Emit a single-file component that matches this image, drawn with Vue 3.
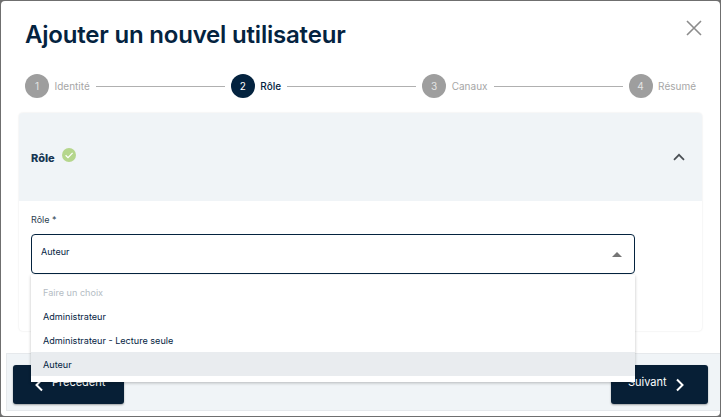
<template>
  <div class="backdrop">
    <div class="modal">
      <header class="modal-header">
        <h1 class="title">Ajouter un nouvel utilisateur</h1>
        <button type="button" class="close" aria-label="Fermer">
          <svg width="16" height="16" viewBox="0 0 16 16">
            <path d="M1 1L15 15M15 1L1 15" stroke="#8c8c8c" stroke-width="1.6" fill="none" />
          </svg>
        </button>
      </header>

      <ol class="stepper">
        <template v-for="(step, i) in steps" :key="step.label">
          <li v-if="i > 0" class="line"></li>
          <li class="step" :class="{ active: step.active }">
            <span class="num">{{ i + 1 }}</span>
            <span class="label">{{ step.label }}</span>
          </li>
        </template>
      </ol>

      <section class="card">
        <div class="card-header">
          <span class="card-title">Rôle</span>
          <svg class="check" width="14" height="14" viewBox="0 0 14 14">
            <circle cx="7" cy="7" r="7" fill="#b5d68c" />
            <path d="M3.6 7.3L6 9.6L10.6 4.8" stroke="#fff" stroke-width="1.2" fill="none" />
          </svg>
          <svg class="chevron" width="12" height="8" viewBox="0 0 12 8">
            <path d="M1 6.8L6 1.8L11 6.8" stroke="#4a4f54" stroke-width="1.7" fill="none" />
          </svg>
        </div>
        <div class="card-body">
          <label class="field-label">Rôle *</label>
          <div class="select-wrap">
            <div class="select">
              <span>Auteur</span>
              <span class="caret"></span>
            </div>
            <ul class="menu">
              <li
                v-for="option in options"
                :key="option.label"
                :class="{ muted: option.muted, selected: option.selected }"
              >
                {{ option.label }}
              </li>
            </ul>
          </div>
        </div>
      </section>

      <footer class="footer">
        <button type="button" class="btn">
          <svg width="10" height="14" viewBox="0 0 10 14">
            <path d="M8 1.5L2.5 7L8 12.5" stroke="#fff" stroke-width="2" fill="none" />
          </svg>
          <span>Précédent</span>
        </button>
        <button type="button" class="btn next">
          <span>Suivant</span>
          <svg width="10" height="14" viewBox="0 0 10 14">
            <path d="M2 1.5L7.5 7L2 12.5" stroke="#fff" stroke-width="2" fill="none" />
          </svg>
        </button>
      </footer>
    </div>
  </div>
</template>

<script setup>
const steps = [
  { label: "Identité" },
  { label: "Rôle", active: true },
  { label: "Canaux" },
  { label: "Résumé" },
];

const options = [
  { label: "Faire un choix", muted: true },
  { label: "Administrateur" },
  { label: "Administrateur - Lecture seule" },
  { label: "Auteur", selected: true },
];
</script>

<style>
html,
body {
  margin: 0;
  overflow: hidden;
}
</style>

<style scoped>
.backdrop {
  width: 721px;
  height: 417px;
  box-sizing: border-box;
  padding: 1px;
  background: #6f6f6f;
  font-family: Inter, "Liberation Sans", sans-serif;
  color: #04233f;
}

.modal {
  height: 415px;
  box-sizing: border-box;
  background: #fff;
  border-radius: 4px;
  display: flex;
  flex-direction: column;
  overflow: hidden;
}

.modal-header {
  display: flex;
  justify-content: space-between;
  align-items: flex-start;
  padding: 18px 18px 0 24px;
  height: 56px;
  box-sizing: border-box;
}

.title {
  margin: 0;
  font-size: 24px;
  line-height: 32px;
  font-weight: 600;
  letter-spacing: -0.2px;
}

.close {
  border: 0;
  padding: 0;
  margin-top: 1px;
  background: none;
  height: 16px;
}

.stepper {
  list-style: none;
  margin: 17px 0 0;
  padding: 0 24px;
  height: 24px;
  display: flex;
  align-items: center;
}

.step {
  display: flex;
  align-items: center;
  gap: 5.5px;
  font-size: 10px;
  color: #a6a6a6;
}

.num {
  width: 24px;
  height: 24px;
  border-radius: 50%;
  background: #9e9e9e;
  color: #e4e4e4;
  font-size: 10px;
  display: flex;
  align-items: center;
  justify-content: center;
}

.step.active .num {
  background: #04233f;
  color: #fff;
}

.step.active .label {
  color: #04233f;
  font-weight: 500;
}

.line {
  flex: 1;
  height: 1px;
  background: #b0b0b0;
  margin: 0 6px;
}

.card {
  margin: 15px 18px 0;
  height: 218px;
  border-radius: 4px;
  box-shadow: 0 0 2px rgba(0, 0, 0, 0.12);
  background: #fff;
}

.card-header {
  height: 88px;
  background: #f0f4f7;
  border-radius: 4px 4px 0 0;
  display: flex;
  align-items: center;
  padding: 0 17px 0 12px;
}

.card-title {
  font-size: 11px;
  font-weight: 800;
  color: #173653;
  margin-top: 1px;
}

.check {
  margin: 0 0 4px 7px;
}

.chevron {
  margin-left: auto;
}

.card-body {
  padding: 13px 67px 0 12px;
}

.field-label {
  display: block;
  font-size: 9px;
  line-height: 12px;
  color: #2c3e50;
  margin-bottom: 8px;
}

.select-wrap {
  position: relative;
}

.select {
  height: 40px;
  box-sizing: border-box;
  border: 1px solid #04233f;
  border-radius: 4px;
  padding: 0 12px 5px 9px;
  font-size: 9px;
  display: flex;
  align-items: center;
  justify-content: space-between;
}

.caret {
  width: 0;
  height: 0;
  margin-top: 5px;
  border-left: 5px solid transparent;
  border-right: 5px solid transparent;
  border-bottom: 5px solid #757575;
}

.menu {
  position: absolute;
  z-index: 2;
  top: 41px;
  left: 0;
  right: 0;
  margin: 0;
  padding: 5px 0 6px;
  list-style: none;
  background: #fff;
  box-shadow: 0 1px 3px rgba(0, 0, 0, 0.25);
  font-size: 9.1px;
}

.menu li {
  height: 24px;
  box-sizing: border-box;
  line-height: 24px;
  padding: 1px 12px 0;
}

.menu li.muted {
  color: #b4bcc4;
}

.menu li.selected {
  background: #e9ecef;
}

.footer {
  margin: 22px 0 5px 5px;
  height: 58px;
  box-sizing: border-box;
  flex: none;
  background: #f0f4f7;
  border: 1px solid #e6e9ec;
  border-width: 1px 0 1px 1px;
  padding: 11px 12px 0 6px;
  display: flex;
  justify-content: space-between;
  align-items: flex-start;
}

.btn {
  height: 39px;
  width: 111px;
  border: 0;
  border-radius: 3px;
  background: #071f36;
  color: #fff;
  font-family: inherit;
  font-size: 11px;
  box-shadow: 0 1px 2px rgba(0, 0, 0, 0.35);
  display: flex;
  align-items: center;
  gap: 8px;
  padding: 0 0 0 21px;
}

.btn span {
  margin-bottom: 5px;
}

.btn.next {
  width: 97px;
  padding-left: 17px;
}
</style>
